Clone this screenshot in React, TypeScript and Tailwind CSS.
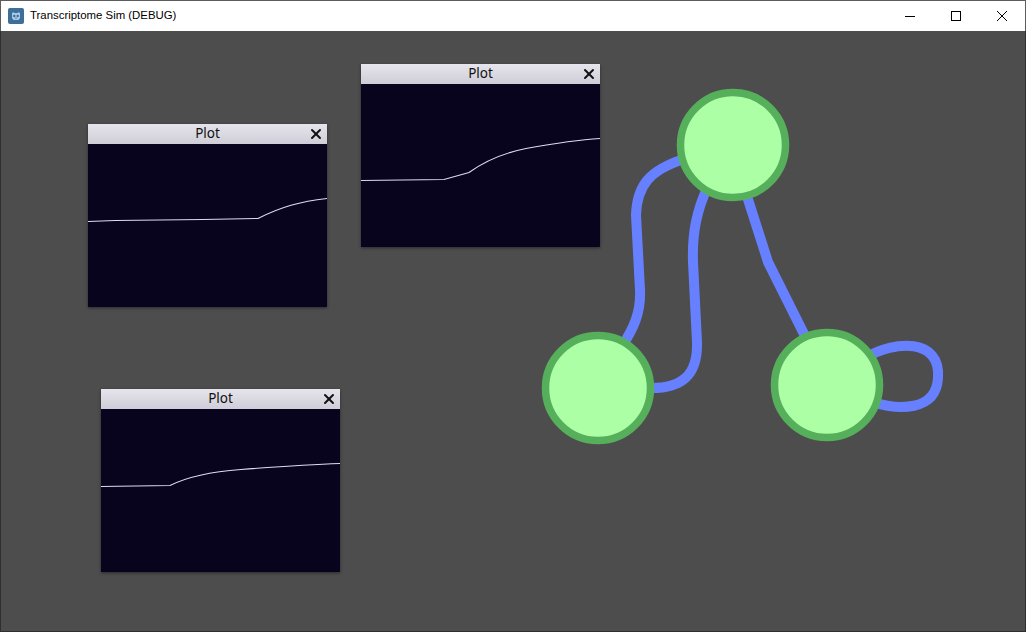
import React from 'react';
import { X } from 'lucide-react';

interface PlotProps {
  left: string;
  top: string;
  d: string;
}

const plots: PlotProps[] = [
  {
    left: 'left-[87px]',
    top: 'top-[93px]',
    d: 'M0 77.5 L27 76.5 L115 75.5 L170 74.5 C 193 63, 212 57.5, 239 54.5',
  },
  {
    left: 'left-[360px]',
    top: 'top-[33px]',
    d: 'M0 96.5 L83 95.5 L108 88.5 C 124 77, 140 69.5, 165 64.5 C 190 60, 214 56, 239 54.5',
  },
  {
    left: 'left-[100px]',
    top: 'top-[358px]',
    d: 'M0 77.5 L69 76.5 C 86 68, 106 63, 140 60.5 C 180 57.5, 210 55.5, 239 54.5',
  },
];

const PlotWindow: React.FC<PlotProps> = ({ left, top, d }) => (
  <div className={`absolute ${left} ${top} w-[239px] h-[183px] flex flex-col shadow-[0_1px_3px_rgba(0,0,0,0.45)]`}>
    <div className="relative h-[20px] flex items-center justify-center bg-gradient-to-b from-[#e6e4ec] to-[#cfcdd7] text-[13.5px] text-[#111] font-['Noto_Sans',sans-serif] leading-none">
      <span>Plot</span>
      <X className="absolute right-[3px] top-[2px] w-[16px] h-[16px] text-[#111]" strokeWidth={3} />
    </div>
    <div className="flex-1 bg-[#08041e]">
      <svg width="239" height="163" viewBox="0 0 239 163" className="block">
        <path d={d} fill="none" stroke="#dcdcf2" strokeWidth="1.1" />
      </svg>
    </div>
  </div>
);

const GodotIcon = () => (
  <svg width="16" height="16" viewBox="0 0 16 16">
    <rect x="0" y="0" width="16" height="16" rx="2" fill="#3c6f9c" />
    <path d="M4 5.5 L5 4 L6.5 5 L9.5 5 L11 4 L12 5.5 L12 10 L10.5 12 L5.5 12 L4 10 Z" fill="#a9c9e6" />
    <circle cx="6.3" cy="8" r="1.2" fill="#3c6f9c" />
    <circle cx="9.7" cy="8" r="1.2" fill="#3c6f9c" />
    <rect x="7.5" y="9.6" width="1" height="1.4" fill="#3c6f9c" />
  </svg>
);

const GraphView = () => (
  <svg width="1026" height="632" viewBox="0 0 1026 632" className="absolute -left-px -top-[31px] pointer-events-none">
    <g fill="none" stroke="#6680ff" strokeWidth="10">
      <path d="M 684 159 C 650 170, 637 185, 636 215 L 640 290 C 641 312, 634 328, 622 346" />
      <path d="M 708 186 C 697 210, 692 232, 693 262 L 697 342 C 698 375, 682 389, 648 388" />
      <path d="M 745 190 L 768 262 L 806 338" />
      <path d="M 865 358 C 895 340, 941 338, 938 378 C 936 412, 898 410, 872 402" />
    </g>
    <g fill="#adffa6" stroke="#56b05b" strokeWidth="7.5">
      <circle cx="733" cy="145" r="52.5" />
      <circle cx="598" cy="388" r="52.5" />
      <circle cx="827" cy="385" r="52.5" />
    </g>
  </svg>
);

export default function App() {
  return (
    <div className="w-[1026px] h-[632px] flex flex-col bg-white font-['Noto_Sans',sans-serif] overflow-hidden">
      <div className="h-[31px] flex items-center border-t border-l border-r border-[#5c5c5c] bg-white">
        <div className="flex items-center gap-[6px] pl-[7px]">
          <GodotIcon />
          <span className="text-[11.4px] text-black font-['Liberation_Sans',sans-serif]">Transcriptome Sim (DEBUG)</span>
        </div>
        <div className="ml-auto flex h-full">
          <div className="w-[46px] flex items-center justify-center">
            <svg width="10" height="10" viewBox="0 0 10 10">
              <line x1="0" y1="5.5" x2="10" y2="5.5" stroke="#000" strokeWidth="1" />
            </svg>
          </div>
          <div className="w-[46px] flex items-center justify-center">
            <svg width="10" height="10" viewBox="0 0 10 10">
              <rect x="0.5" y="0.5" width="9" height="9" fill="none" stroke="#000" strokeWidth="1" />
            </svg>
          </div>
          <div className="w-[46px] flex items-center justify-center">
            <svg width="10" height="10" viewBox="0 0 10 10">
              <path d="M0 0 L10 10 M10 0 L0 10" stroke="#000" strokeWidth="1" />
            </svg>
          </div>
        </div>
      </div>
      <div className="relative flex-1 bg-[#4d4d4d] border-l border-r border-b border-[#2f2f2f]">
        <GraphView />
        {plots.map((p, i) => (
          <PlotWindow key={i} {...p} />
        ))}
      </div>
    </div>
  );
}
